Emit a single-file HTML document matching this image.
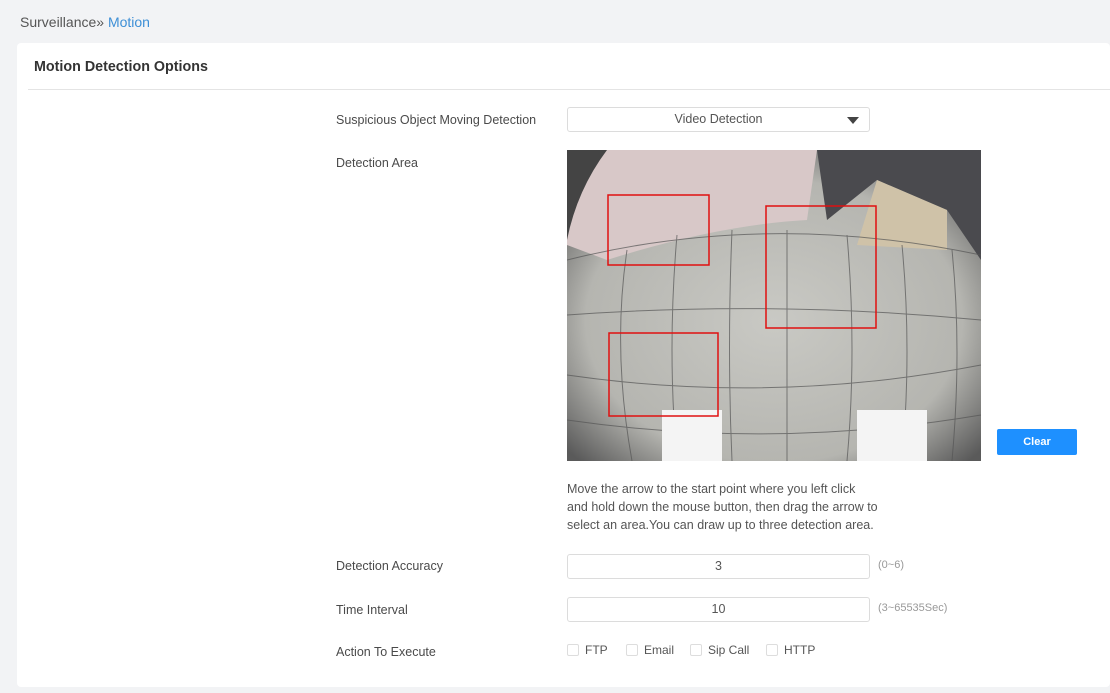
<!DOCTYPE html>
<html><head><meta charset="utf-8"><style>
*{box-sizing:border-box;margin:0;padding:0}
body{width:1110px;height:693px;background:#f2f3f5;font-family:"Liberation Sans",sans-serif;position:relative;overflow:hidden;color:#333}
.bc{position:absolute;left:20px;top:14px;font-size:14px;color:#555}
.bc span{color:#3d8fd6}
.card{position:absolute;left:17px;top:43px;width:1093px;height:644px;background:#fff;border-radius:4px}
.title{position:absolute;left:34px;top:59px;font-size:14.3px;font-weight:bold;color:#333}
.hr{position:absolute;left:28px;top:89px;width:1082px;height:1px;background:#e4e4e4}
.lbl{position:absolute;left:336px;font-size:12.5px;color:#4a4a4a}
.inp{position:absolute;left:567px;width:303px;height:25px;border:1px solid #dcdcdc;border-radius:3px;font-size:12.5px;color:#555;text-align:center;line-height:23px}
.hint{position:absolute;left:878px;font-size:11px;color:#999}
.btn{position:absolute;left:997px;top:429px;width:80px;height:26px;background:#1e90ff;color:#fff;font-size:11px;font-weight:bold;text-align:center;line-height:26px;border-radius:2px}
.desc{position:absolute;left:567px;top:480px;font-size:12.5px;color:#555;line-height:18px}
.cb{position:absolute;top:643px;font-size:12px;color:#555}
.cb i{display:inline-block;width:12px;height:12px;border:1px solid #ddd;border-radius:2px;vertical-align:-2px;margin-right:6px}
</style></head><body>
<div class="bc">Surveillance» <span>Motion</span></div>
<div class="card"></div>
<div class="title">Motion Detection Options</div>
<div class="hr"></div>
<div class="lbl" style="top:113px">Suspicious Object Moving Detection</div>
<div class="inp" style="top:107px">Video Detection<svg style="position:absolute;right:10px;top:9px" width="12" height="7"><path d="M0 0H12L6 7Z" fill="#444"/></svg></div>
<div class="lbl" style="top:156px">Detection Area</div>
<svg style="position:absolute;left:567px;top:150px" width="414" height="311" viewBox="0 0 414 311">
<defs><radialGradient id="g" cx="50%" cy="55%" r="65%"><stop offset="0" stop-color="#c9c9c4"/><stop offset="0.7" stop-color="#b5b5b0"/><stop offset="1" stop-color="#5a5a5a"/></radialGradient></defs>
<rect width="414" height="311" fill="url(#g)"/>
<path d="M20 0H250L240 70Q150 75 40 110L0 95V20Z" fill="#d8c8c8"/>
<path d="M250 0H414V110L380 60L310 30L260 70Z" fill="#4a4a4e"/>
<path d="M310 30L380 60L380 100L290 95Z" fill="#cfc2a8"/>
<path d="M0 0H40Q10 40 0 90Z" fill="#444"/>
<g stroke="#555" stroke-width="1" fill="none" opacity="0.7">
<path d="M0 110Q200 60 414 105"/><path d="M0 165Q207 150 414 170"/><path d="M0 225Q207 255 414 215"/><path d="M0 270Q207 300 414 265"/>
<path d="M60 100Q45 200 65 311"/><path d="M110 85Q100 200 110 311"/><path d="M165 80Q160 200 165 311"/><path d="M220 80V311"/><path d="M280 85Q290 200 280 311"/><path d="M335 95Q345 200 335 311"/><path d="M385 100Q395 200 385 311"/>
</g>
<rect x="95" y="260" width="60" height="51" fill="#f4f4f4"/><rect x="290" y="260" width="70" height="51" fill="#f4f4f4"/>
<g fill="none" stroke="#e01010" stroke-width="1.5">
<rect x="41" y="45" width="101" height="70"/><rect x="199" y="56" width="110" height="122"/><rect x="42" y="183" width="109" height="83"/>
</g></svg>
<div class="btn">Clear</div>
<div class="desc">Move the arrow to the start point where you left click<br>and hold down the mouse button, then drag the arrow to<br>select an area.You can draw up to three detection area.</div>
<div class="lbl" style="top:559px">Detection Accuracy</div>
<div class="inp" style="top:554px">3</div><div class="hint" style="top:559px">(0~6)</div>
<div class="lbl" style="top:603px">Time Interval</div>
<div class="inp" style="top:597px">10</div><div class="hint" style="top:602px">(3~65535Sec)</div>
<div class="lbl" style="top:645px">Action To Execute</div>
<div class="cb" style="left:567px"><i></i>FTP</div>
<div class="cb" style="left:626px"><i></i>Email</div>
<div class="cb" style="left:690px"><i></i>Sip Call</div>
<div class="cb" style="left:766px"><i></i>HTTP</div>
</body></html>
